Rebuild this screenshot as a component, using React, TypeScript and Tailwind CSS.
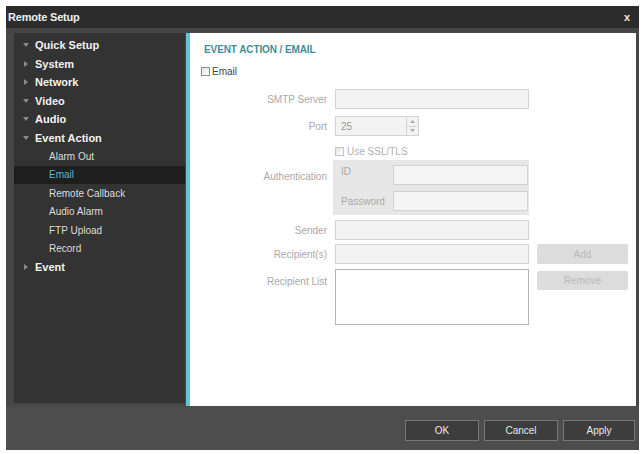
import React from "react";

const font = { fontFamily: '"Liberation Sans", Arial, sans-serif' };

type Item = { label: string; level: 0 | 1; tri?: "down" | "right"; active?: boolean };

const items: Item[] = [
  { label: "Quick Setup", level: 0, tri: "down" },
  { label: "System", level: 0, tri: "right" },
  { label: "Network", level: 0, tri: "right" },
  { label: "Video", level: 0, tri: "down" },
  { label: "Audio", level: 0, tri: "down" },
  { label: "Event Action", level: 0, tri: "down" },
  { label: "Alarm Out", level: 1 },
  { label: "Email", level: 1, active: true },
  { label: "Remote Callback", level: 1 },
  { label: "Audio Alarm", level: 1 },
  { label: "FTP Upload", level: 1 },
  { label: "Record", level: 1 },
  { label: "Event", level: 0, tri: "right" },
];

function Tri({ dir }: { dir: "down" | "right" }) {
  return (
    <svg width="6" height="6" viewBox="0 0 6 6" className="shrink-0">
      {dir === "down" ? (
        <polygon points="0,1 6,1 3,5" fill="#8a8a8a" />
      ) : (
        <polygon points="1,0 5,3 1,6" fill="#8a8a8a" />
      )}
    </svg>
  );
}

function Check({ light }: { light?: boolean }) {
  return (
    <div
      className={`w-[9px] h-[9px] border ${light ? "border-[#c4c4c4]" : "border-[#8d8d8d]"} bg-gradient-to-br from-[#e4e4e4] to-white shrink-0`}
    />
  );
}

function Field({ w = "w-[194px]", children }: { w?: string; children?: React.ReactNode }) {
  return (
    <div className={`${w} h-[20px] border border-[#d2d2d2] bg-[#f3f3f3] flex items-center`}>
      {children}
    </div>
  );
}

function Label({ children, top }: { children: React.ReactNode; top?: boolean }) {
  return (
    <div
      className={`w-[145px] shrink-0 pr-[8px] text-right text-[10px] text-[#a9a9a9] ${top ? "pt-[5px]" : ""}`}
    >
      {children}
    </div>
  );
}

function BottomBtn({ children, w }: { children: React.ReactNode; w: string }) {
  return (
    <div
      className={`${w} h-[21px] border border-[#777] bg-[#3d3d3d] flex items-center justify-center text-[10px] text-[#e8e8e8]`}
    >
      {children}
    </div>
  );
}

export default function App() {
  return (
    <div className="w-[643px] h-[454px] bg-white pt-[6px] pl-[6px]" style={font}>
      <div className="w-[633px] h-[444px] bg-[#4a4a4a] flex flex-col">
        {/* title bar */}
        <div className="h-[22px] bg-[#2c2c2c] flex items-center justify-between pl-[2px] pr-[9px] shrink-0">
          <span className="text-[11px] font-bold text-[#f0f0f0] tracking-[-0.2px]">Remote Setup</span>
          <span className="text-[11px] font-bold text-[#e8e8e8]">x</span>
        </div>
        {/* body */}
        <div className="flex h-[378px] pt-[5px] pl-[8px] pr-[3px] bg-[#464646]">
          {/* sidebar */}
          <div className="w-[171px] h-[370px] bg-[#333333] pt-[3px] shrink-0">
            {items.map((it) => (
              <div
                key={it.label}
                className={`h-[18.5px] flex items-center ${it.active ? "bg-[#1e1e1e]" : ""}`}
              >
                {it.level === 0 ? (
                  <div className="flex items-center pl-[9px]">
                    <Tri dir={it.tri!} />
                    <span className="ml-[6px] text-[11px] font-bold text-[#f2f2f2]">{it.label}</span>
                  </div>
                ) : (
                  <span
                    className={`pl-[35px] text-[10px] ${it.active ? "text-[#5db8c9]" : "text-[#dcdcdc]"}`}
                  >
                    {it.label}
                  </span>
                )}
              </div>
            ))}
          </div>
          {/* content */}
          <div className="flex-1 h-[373px] ml-[1px] border-l-[4px] border-[#62c6d1] bg-white flex flex-col">
            <div className="mt-[11px] pl-[14px] text-[10px] font-bold text-[#3f8e9b] leading-[12px] tracking-[-0.1px]">
              EVENT ACTION / EMAIL
            </div>
            <div className="mt-[9px] pl-[11px] flex items-center h-[12px]">
              <Check />
              <span className="ml-[2px] text-[10px] text-[#444]">Email</span>
            </div>
            {/* SMTP */}
            <div className="mt-[12px] flex items-center">
              <Label>SMTP Server</Label>
              <Field />
            </div>
            {/* Port */}
            <div className="mt-[7px] flex items-center">
              <Label>Port</Label>
              <Field w="w-[84px]">
                <span className="flex-1 pl-[5px] text-[10px] text-[#999]">25</span>
                <div className="w-[11px] h-[18px] border-l border-[#d2d2d2] flex flex-col mr-[1px]">
                  <div className="flex-1 flex items-center justify-center border-b border-[#d2d2d2]">
                    <svg width="5" height="3" viewBox="0 0 5 3">
                      <polygon points="0,3 5,3 2.5,0" fill="#aaa" />
                    </svg>
                  </div>
                  <div className="flex-1 flex items-center justify-center">
                    <svg width="5" height="3" viewBox="0 0 5 3">
                      <polygon points="0,0 5,0 2.5,3" fill="#aaa" />
                    </svg>
                  </div>
                </div>
              </Field>
            </div>
            {/* SSL */}
            <div className="mt-[9px] flex items-center h-[12px]">
              <div className="w-[145px] shrink-0" />
              <Check light />
              <span className="ml-[3px] text-[10px] text-[#b0b0b0]">Use SSL/TLS</span>
            </div>
            {/* Auth */}
            <div className="mt-[3px] flex items-start">
              <div className="w-[143px] shrink-0 pr-[6px] pt-[9px] text-right text-[10px] text-[#a9a9a9]">
                Authentication
              </div>
              <div className="w-[196px] h-[55px] bg-[#e7e7e7] pt-[5px] pr-[1px] flex flex-col gap-[6px]">
                <div className="flex items-start">
                  <span className="w-[60px] pl-[8px] text-[10px] text-[#a9a9a9] leading-[12px] pt-[1px]">ID</span>
                  <div className="w-[135px] h-[20px] border border-[#d2d2d2] bg-[#f5f5f5]" />
                </div>
                <div className="flex items-center">
                  <span className="w-[60px] pl-[8px] text-[10px] text-[#a9a9a9]">Password</span>
                  <div className="w-[135px] h-[20px] border border-[#d2d2d2] bg-[#f5f5f5]" />
                </div>
              </div>
            </div>
            {/* Sender */}
            <div className="mt-[5px] flex items-center">
              <Label>Sender</Label>
              <Field />
            </div>
            {/* Recipients */}
            <div className="mt-[4px] flex items-center">
              <Label>Recipient(s)</Label>
              <Field />
              <div className="ml-[8px] w-[91px] h-[20px] rounded-[2px] bg-[#dcdcdc] flex items-center justify-center text-[10px] text-[#b9b9b9]">
                Add
              </div>
            </div>
            {/* Recipient list */}
            <div className="mt-[5px] flex items-start">
              <Label top>Recipient List</Label>
              <div className="w-[194px] h-[56px] border border-[#b4b4b4] bg-white" />
              <div className="ml-[8px] mt-[2px] w-[91px] h-[19px] rounded-[2px] bg-[#dcdcdc] flex items-center justify-center text-[10px] text-[#b9b9b9]">
                Remove
              </div>
            </div>
          </div>
        </div>
        {/* bottom bar */}
        <div className="flex-1 bg-[#4d4d4d] flex justify-end items-start pt-[14px] pr-[4px] gap-[5px]">
          <BottomBtn w="w-[74px]">OK</BottomBtn>
          <BottomBtn w="w-[74px]">Cancel</BottomBtn>
          <BottomBtn w="w-[72px]">Apply</BottomBtn>
        </div>
      </div>
    </div>
  );
}
